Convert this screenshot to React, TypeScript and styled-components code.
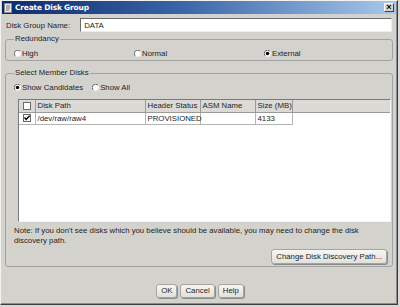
import React from 'react'
import styled, { createGlobalStyle } from 'styled-components'

const GlobalStyle = createGlobalStyle`
  html, body {
    margin: 0;
    padding: 0;
    background: #d8d8d8;
  }
  body {
    font-family: 'Liberation Sans', Arial, sans-serif;
    font-size: 7.8px;
    color: #1e1e1e;
  }
  * {
    box-sizing: border-box;
  }
`

const RadioIcon = ({ checked }: { checked?: boolean }) => (
  <svg width="7" height="7" viewBox="0 0 12 12">
    <circle cx="6" cy="6" r="5.5" fill="#fff" />
    <path d="M2 10 A5.3 5.3 0 0 1 10 2" stroke="#5a5a5a" strokeWidth="1.6" fill="none" />
    {checked && <circle cx="6" cy="6" r="3" fill="#000" />}
  </svg>
)

const CheckIcon = ({ checked }: { checked?: boolean }) => (
  <svg width="8" height="8" viewBox="0 0 8 8">
    <rect x="0.5" y="0.5" width="7" height="7" fill="#fff" stroke="#6a6a6a" />
    {checked && <path d="M1.5 3.5 L3.2 5.5 L6.6 1.8" stroke="#000" strokeWidth="1.4" fill="none" />}
  </svg>
)

const Radio = ({ label, checked }: { label: string; checked?: boolean }) => (
  <RadioLabel>
    <RadioIcon checked={checked} />
    <span>{label}</span>
  </RadioLabel>
)

const App: React.FC = () => {
  return (
    <>
      <GlobalStyle />
      <Window>
        <TitleBar>
          <svg width="8" height="10" viewBox="0 0 8 10">
            <rect x="0.5" y="0.5" width="7" height="9" fill="#e8e8e8" stroke="#8a8a8a" />
            <path d="M2 3 H6 M2 5 H6 M2 7 H5" stroke="#707070" strokeWidth="1" />
          </svg>
          <Title>Create Disk Group</Title>
          <CloseButton>×</CloseButton>
        </TitleBar>

        <Body>
          <NameRow>
            <span>Disk Group Name:</span>
            <TextInput value="DATA" readOnly />
          </NameRow>

          <GroupBox>
            <legend>Redundancy</legend>
            <RedundancyRow>
              <Radio label="High" />
              <Radio label="Normal" />
              <Radio label="External" checked />
            </RedundancyRow>
          </GroupBox>

          <GroupBox $gap={7}>
            <legend>Select Member Disks</legend>
            <ShowRow>
              <Radio label="Show Candidates" checked />
              <Radio label="Show All" />
            </ShowRow>

            <TablePane>
              <DiskTable>
                <colgroup>
                  <col style={{ width: 16 }} />
                  <col style={{ width: 110 }} />
                  <col style={{ width: 55 }} />
                  <col style={{ width: 55 }} />
                  <col style={{ width: 37 }} />
                  <col />
                </colgroup>
                <thead>
                  <tr>
                    <HeadCell $center>
                      <CheckIcon />
                    </HeadCell>
                    <HeadCell>Disk Path</HeadCell>
                    <HeadCell>Header Status</HeadCell>
                    <HeadCell>ASM Name</HeadCell>
                    <HeadCell>Size (MB)</HeadCell>
                    <HeadCell $filler />
                  </tr>
                </thead>
                <tbody>
                  <tr>
                    <Cell $center>
                      <CheckIcon checked />
                    </Cell>
                    <Cell>/dev/raw/raw4</Cell>
                    <Cell>PROVISIONED</Cell>
                    <Cell></Cell>
                    <Cell>4133</Cell>
                    <Cell $filler />
                  </tr>
                </tbody>
              </DiskTable>
            </TablePane>

            <Note>
              Note: If you don't see disks which you believe should be available, you may need to
              change the disk discovery path.
            </Note>
            <PathRow>
              <Button>Change Disk Discovery Path...</Button>
            </PathRow>
          </GroupBox>

          <Footer>
            <Button>OK</Button>
            <Button>Cancel</Button>
            <Button>Help</Button>
          </Footer>
        </Body>
      </Window>
    </>
  )
}

const Window = styled.div`
  width: 398px;
  height: 305px;
  background: #d4d2cc;
  border: 1px solid;
  border-color: #f2f2f2 #3c3c3c #3c3c3c #f2f2f2;
  box-shadow: inset -1px -1px 0 #8a8a8a;
  display: flex;
  flex-direction: column;
`

const TitleBar = styled.div`
  height: 13px;
  margin: 0 1px;
  padding: 0 2px 0 2px;
  display: flex;
  align-items: center;
  gap: 3px;
  background: linear-gradient(to right, #0c2a6c 0%, #3a64a8 45%, #a8c8ec 100%);
`

const Title = styled.span`
  flex: 1;
  color: #fff;
  font-weight: bold;
  font-size: 7.5px;
  font-family: 'DejaVu Sans', Verdana, sans-serif;
  letter-spacing: -0.2px;
`

const CloseButton = styled.span`
  width: 10px;
  height: 9px;
  display: flex;
  align-items: center;
  justify-content: center;
  background: #d4d2cc;
  border: 1px solid;
  border-color: #fff #404040 #404040 #fff;
  font-size: 9px;
  font-weight: bold;
  line-height: 1;
  color: #000;
`

const Body = styled.div`
  flex: 1;
  padding: 4px 4px 0 4px;
  display: flex;
  flex-direction: column;
`

const NameRow = styled.div`
  height: 14px;
  display: flex;
  align-items: center;
  gap: 10px;
  padding-left: 1px;
  padding-right: 1px;
`

const TextInput = styled.input`
  flex: 1;
  height: 14px;
  margin: 0;
  padding: 0 3px;
  font: inherit;
  color: inherit;
  background: #fff;
  border: 1px solid;
  border-color: #6a6a6a #ececec #ececec #6a6a6a;
  outline: none;
`

const GroupBox = styled.fieldset<{ $gap?: number }>`
  margin: ${(p) => p.$gap ?? 2}px 0 0 0;
  padding: 4px 1px 2px 8px;
  border: 1px solid #a2a2a2;
  border-radius: 3px;
  min-width: 0;

  legend {
    padding: 0 1px;
    line-height: 10px;
  }
`

const RadioLabel = styled.label`
  display: flex;
  align-items: center;
  gap: 1px;
  height: 10px;
  white-space: nowrap;
`

const RedundancyRow = styled.div`
  display: grid;
  grid-template-columns: 120px 130px 1fr;
  height: 10px;
`

const ShowRow = styled.div`
  display: flex;
  gap: 9px;
  height: 10px;
`

const TablePane = styled.div`
  height: 123px;
  margin: 7px 0 0 4px;
  background: #fff;
  border: 1px solid;
  border-color: #7a7a7a #f4f4f4 #f4f4f4 #7a7a7a;
  overflow: hidden;
`

const DiskTable = styled.table`
  width: 100%;
  border-collapse: collapse;
  table-layout: fixed;
`

const HeadCell = styled.th<{ $center?: boolean; $filler?: boolean }>`
  height: 12px;
  padding: 0 2px;
  font-weight: normal;
  text-align: ${(p) => (p.$center ? 'center' : 'left')};
  background: #dcdad6;
  border-bottom: 1px solid #9a9a9a;
  border-right: ${(p) => (p.$filler ? 'none' : '1px solid #9a9a9a')};
  white-space: nowrap;
  overflow: hidden;
  line-height: 11px;

  svg {
    display: block;
    margin: 0 auto;
  }
`

const Cell = styled.td<{ $center?: boolean; $filler?: boolean }>`
  height: 12px;
  padding: 0 2px;
  text-align: ${(p) => (p.$center ? 'center' : 'left')};
  border-bottom: ${(p) => (p.$filler ? 'none' : '1px solid #b4b4b4')};
  border-right: ${(p) => (p.$filler ? 'none' : '1px solid #b4b4b4')};
  white-space: nowrap;
  line-height: 11px;

  svg {
    display: block;
    margin: 0 auto;
  }
`

const Note = styled.div`
  margin-top: 4px;
  line-height: 10px;
  padding-right: 6px;
`

const PathRow = styled.div`
  display: flex;
  justify-content: flex-end;
  margin-top: 3px;
  padding-right: 4px;
`

const Button = styled.button`
  height: 15px;
  padding: 0 4px;
  font: inherit;
  color: #1e1e1e;
  background: linear-gradient(#f6f6f4, #e2e0da);
  border: 1px solid #a4a4a4;
  border-radius: 3px;
  box-shadow: 1px 1px 0 #8c8c8c;
  line-height: 12px;
`

const Footer = styled.div`
  display: flex;
  justify-content: center;
  gap: 3px;
  padding-top: 17px;
  padding-left: 2px;

  button {
    height: 14px;
  }
`

export default App
